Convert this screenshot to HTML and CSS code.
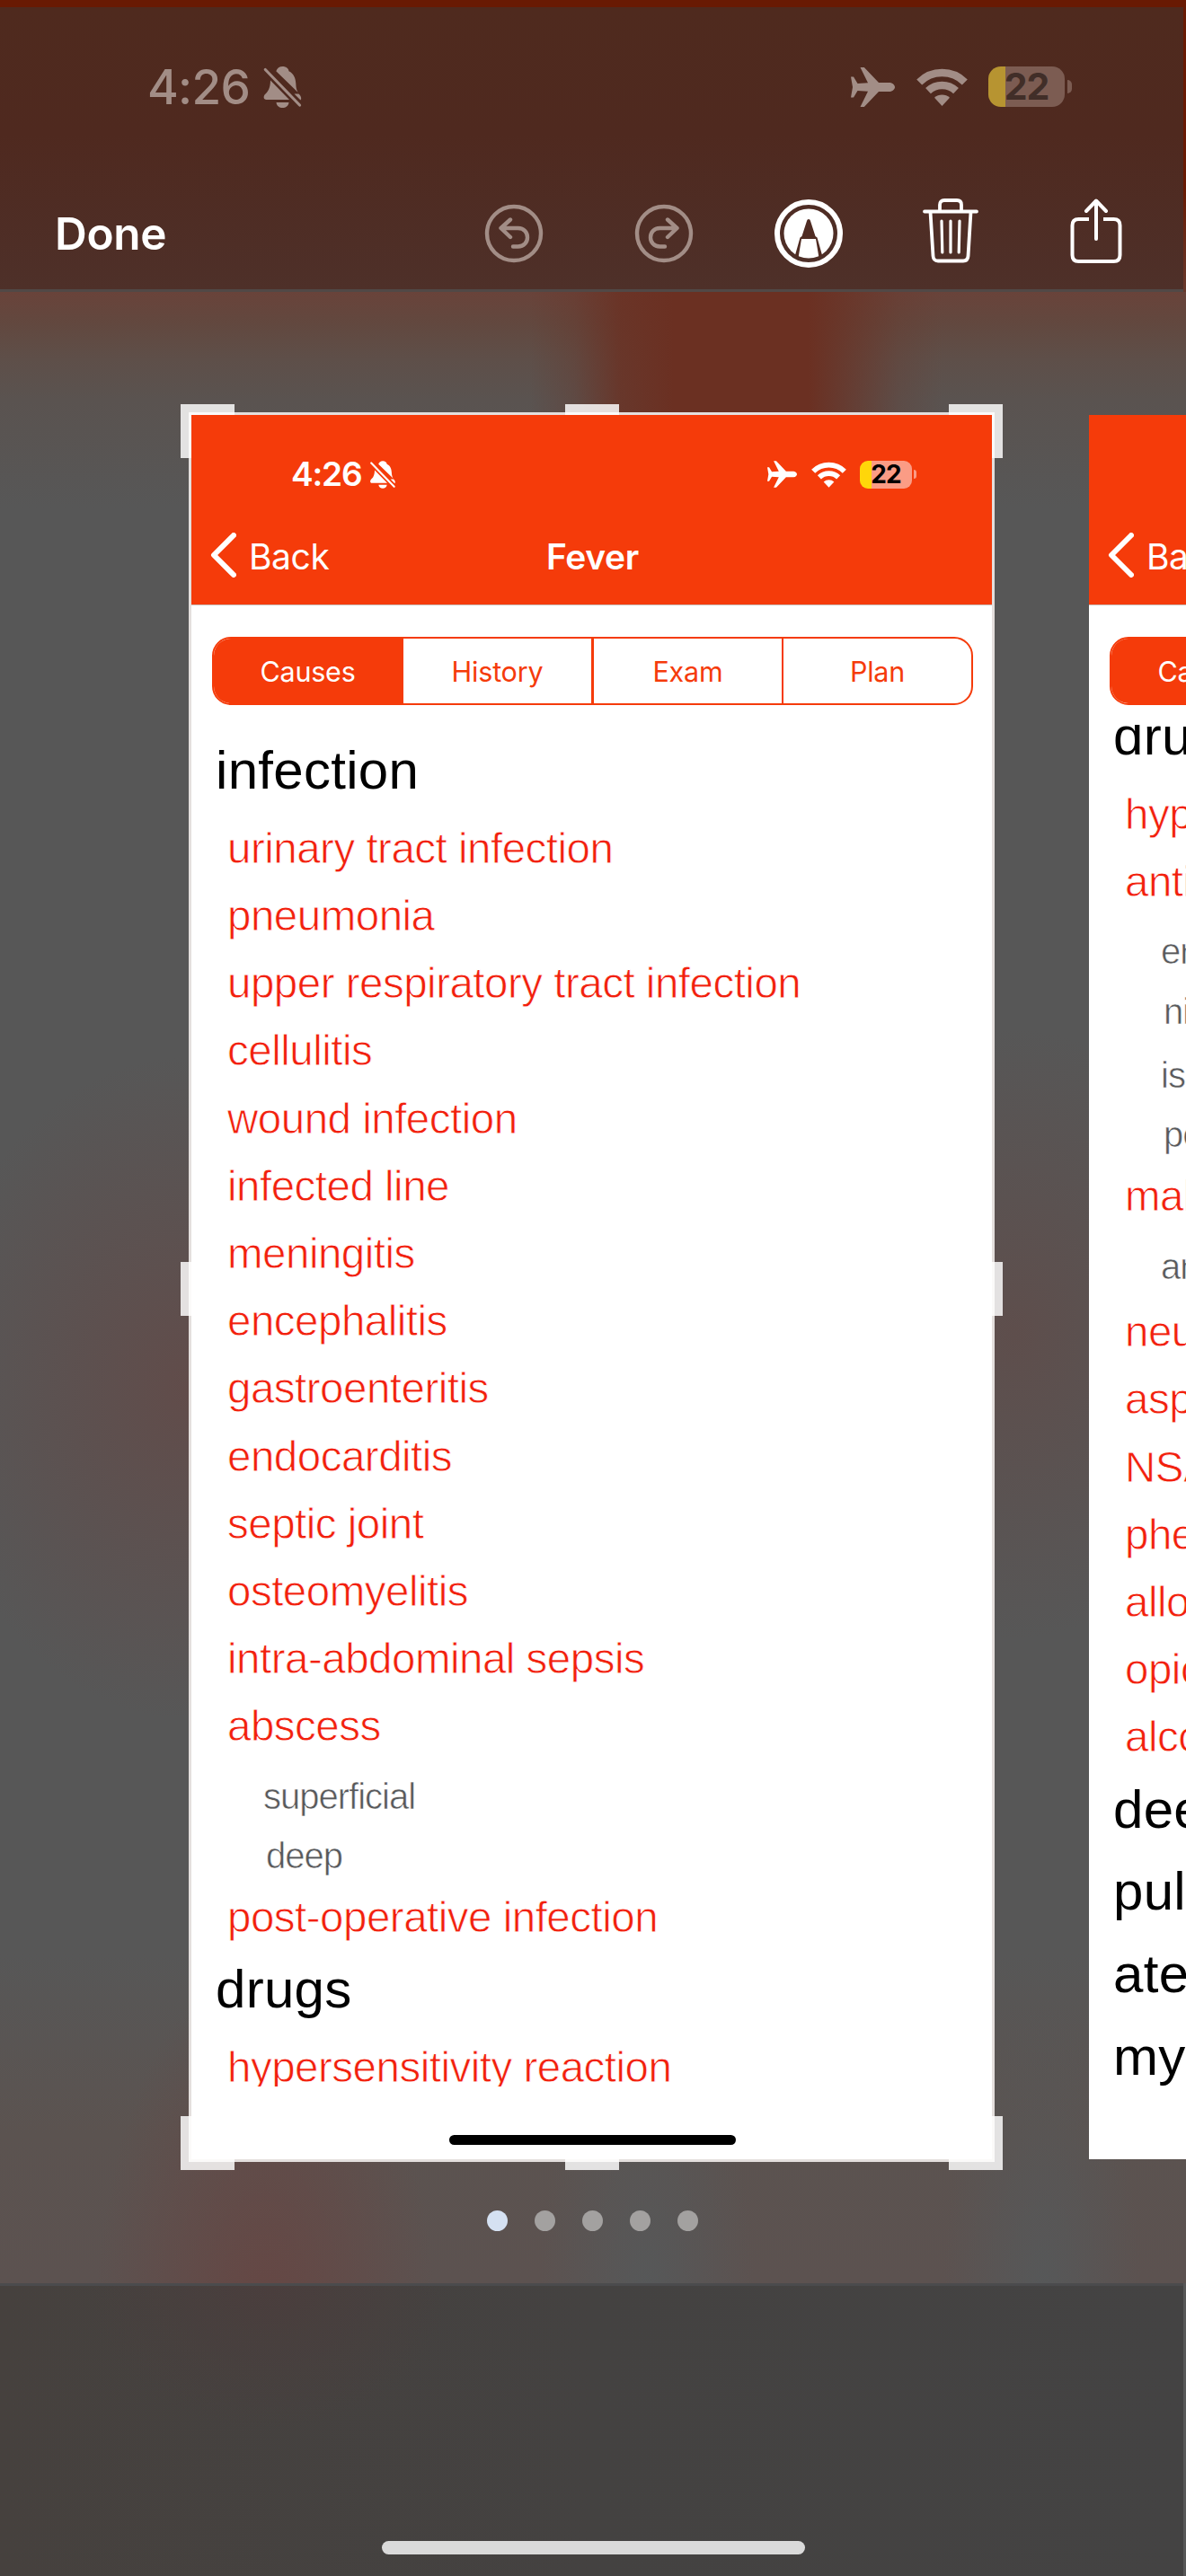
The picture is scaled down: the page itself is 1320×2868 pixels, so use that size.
FILE: index.html
```html
<!DOCTYPE html>
<html lang="en">
<head>
<meta charset="utf-8">
<title>Fever</title>
<link rel="stylesheet" href="styles.css">
</head>
<body>
<svg class="defs" width="0" height="0" aria-hidden="true">
  <symbol id="bell" viewBox="0 0 42 46">
    <path d="M21 0c4 0 6.500 2.200 7 5.200 5.500 2.500 7.500 8 7.800 13.800.2 5.500 1.200 8.300 2.700 10.300L13.800 5.200C15 1.800 17.500 0 21 0zM7.500 15.500 28.500 37H3C-.5 37-.5 33 1.500 31c3-2.800 5.800-6 6-15.500zM14 40h14c-.5 4-3.500 6-7 6s-6.500-2-7-6z" fill="currentColor"/>
    <path d="M34 30.500 41 37.500c1.500-2 .5-4.500-2-7z" fill="currentColor"/>
    <path d="M1.800 3.500 40 43" stroke="currentColor" stroke-width="3.200" stroke-linecap="round"/>
  </symbol>
  <symbol id="plane" viewBox="0 0 49 44">
    <path d="M0 10.500h3L7.500 18 19 17.300 10.500 0h4.300L31 17h12.500C47 17.500 49 20 49 22s-2 4.500-5.500 5H31L14.800 44h-4.300L19 26.700 7.500 26 3 33.500H0L2 22z" fill="currentColor"/>
  </symbol>
  <symbol id="wifi" viewBox="0 0 57 42">
    <path d="M3.200 15.500a36 36 0 0 1 50.600 0M13 25.200a22.500 22.500 0 0 1 31 0" fill="none" stroke="currentColor" stroke-width="8.500"/>
    <path d="M28.500 42 20 32.800a12.500 12.500 0 0 1 17 0z" fill="currentColor"/>
  </symbol>
</svg>

<div class="screen">
  <header class="topbar">
    <div class="status">
      <span class="time">4:26</span>
      <svg class="bell"><use href="#bell"/></svg>
      <svg class="plane"><use href="#plane"/></svg>
      <svg class="wifi"><use href="#wifi"/></svg>
      <span class="battery">22</span><i class="nub"></i>
    </div>
    <div class="tools">
      <span class="done">Done</span>
      <svg class="undo" viewBox="0 0 66 66"><g fill="none" stroke="currentColor" stroke-width="4.400" stroke-linecap="round" stroke-linejoin="round"><circle cx="33" cy="33" r="30"/><path d="M29 17.500 18.500 27 29 37M19 27h18.500c14 0 14 20.500 0 20.500H32"/></g></svg>
      <svg class="redo" viewBox="0 0 66 66"><g fill="none" stroke="currentColor" stroke-width="4.400" stroke-linecap="round" stroke-linejoin="round"><circle cx="33" cy="33" r="30"/><path d="M37 17.500 47.500 27 37 37M47 27H28.500c-14 0-14 20.500 0 20.500H34"/></g></svg>
      <svg class="markup" viewBox="0 0 76 76"><circle cx="38" cy="38" r="35" fill="none" stroke="#fff" stroke-width="6"/><circle cx="38" cy="38" r="27.500" fill="#fff"/><path d="M38 22c1 0 1.700.8 2 2l5.500 17 2 1.500L53 62l-3.500 3L46 44H30l-3.500 21-3.500-3 5.500-19.500 2-1.500L36 24c.3-1.200 1-2 2-2z" fill="#502c23"/></svg>
      <svg class="trash" viewBox="0 0 62 72"><g fill="none" stroke="#fff" stroke-width="3.800" stroke-linecap="round" stroke-linejoin="round"><path d="M2 14.500h58M19 14V7q0-5 5-5h14q5 0 5 5v7M8.500 15l3 49q.4 5.500 5.500 5.500h28q5.100 0 5.500-5.500l3-49"/><path d="M21 25l.8 35M31 25v35M41 25l-.8 35" stroke-width="3.200"/></g></svg>
      <svg class="share" viewBox="0 0 58 72"><g fill="none" stroke="#fff" stroke-width="4" stroke-linecap="round" stroke-linejoin="round"><path d="M21 23H9.500Q2.500 23 2.500 30v33q0 7 7 7h39q7 0 7-7V30q0-7-7-7H37" stroke-linecap="butt"/><path d="M29 45V3M18 14 29 2.500 40 14"/></g></svg>
    </div>
  </header>

  <main class="stage">
    <div class="strip">
      <section class="page">
        <div class="head">
          <div class="status small">
            <span class="time">4:26</span>
            <svg class="bell"><use href="#bell"/></svg>
            <svg class="plane"><use href="#plane"/></svg>
            <svg class="wifi"><use href="#wifi"/></svg>
            <span class="battery">22</span><i class="nub"></i>
          </div>
          <div class="nav">
            <svg class="chev" viewBox="0 0 29 50"><path d="M26 3 4 25l22 22" fill="none" stroke="#fff" stroke-width="6" stroke-linecap="round" stroke-linejoin="round"/></svg>
            <span class="back">Back</span><h1>Fever</h1>
          </div>
        </div>
        <div class="tabs"><span class="on">Causes</span><span>History</span><span>Exam</span><span>Plan</span></div>
        <div class="list">
          <div class="scroll first">
            <h2>infection</h2>
            <p>urinary tract infection</p>
            <p>pneumonia</p>
            <p>upper respiratory tract infection</p>
            <p>cellulitis</p>
            <p>wound infection</p>
            <p>infected line</p>
            <p>meningitis</p>
            <p>encephalitis</p>
            <p>gastroenteritis</p>
            <p>endocarditis</p>
            <p>septic joint</p>
            <p>osteomyelitis</p>
            <p>intra-abdominal sepsis</p>
            <p>abscess</p>
            <p class="sub">superficial</p>
            <p class="sub alt">deep</p>
            <p>post-operative infection</p>
            <h2>drugs</h2>
            <p>hypersensitivity reaction</p>
          </div>
        </div>
        <div class="home"></div>
        <div class="frame"><i></i><i></i><i></i><i></i><i></i><i></i><i></i><i></i></div>
      </section>

      <section class="page">
        <div class="head">
          <div class="status small"></div>
          <div class="nav">
            <svg class="chev" viewBox="0 0 29 50"><path d="M26 3 4 25l22 22" fill="none" stroke="#fff" stroke-width="6" stroke-linecap="round" stroke-linejoin="round"/></svg>
            <span class="back">Back</span>
          </div>
        </div>
        <div class="tabs"><span class="on">Causes</span><span></span><span></span><span></span></div>
        <div class="list">
          <div class="scroll second">
            <h2>drugs</h2>
            <p>hypersensitivity</p>
            <p>antibiotics</p>
            <p class="sub">erythromycin</p>
            <p class="sub alt">nitrofurantoin</p>
            <p class="sub">isoniazid</p>
            <p class="sub alt">penicillin</p>
            <p>malignant</p>
            <p class="sub">anaesthetic</p>
            <p>neuroleptic</p>
            <p>aspirin</p>
            <p>NSAIDs</p>
            <p>phenytoin</p>
            <p>allopurinol</p>
            <p>opioids</p>
            <p>alcohol</p>
            <h2>deep vein</h2>
            <h2>pulmonary</h2>
            <h2>atelectasis</h2>
            <h2>myocardial</h2>
          </div>
        </div>
      </section>
    </div>
    <div class="dots"><i class="cur"></i><i></i><i></i><i></i><i></i></div>
  </main>

  <footer class="bottom"><div class="bar"></div></footer>
</div>
</body>
</html>
```
FILE: styles.css
```css
* { box-sizing: border-box; }
body { margin: 0; font-family: Inter, "Liberation Sans", sans-serif; }
.defs { position: absolute; }
svg { display: block; flex: none; }
h1, h2, p { margin: 0; font-weight: 400; }

.screen {
  width: 1320px; height: 2868px; overflow: hidden;
  display: flex; flex-direction: column;
  background: linear-gradient(#691a03 0, #691a03 210px, #68382b 322px, #575757 500px);
}

/* toolbar */
.topbar {
  margin-top: 8px; width: 1317px; height: 317px;
  border-bottom: 3px solid #514846;
  background: linear-gradient(#4f2a1e, #4f291f 45%, #4e3029);
}
.status { display: flex; align-items: center; height: 134px; padding: 43px 0 0 164px; color: #a28d86; }
.status .time { flex: none; font-size: 53px; font-weight: 500; line-height: 60px; width: 129px; letter-spacing: -.700px; white-space: nowrap; }
.bell { width: 43px; height: 46px; }
.plane { width: 49px; height: 44px; margin-left: 611px; }
.wifi { width: 57px; height: 42px; margin: 0 23px 0 24px; }
.battery {
  width: 85px; height: 45px; border-radius: 14px; line-height: 45px; text-align: center;
  font-size: 41px; font-weight: 700; color: #412e28; letter-spacing: -1px;
  background: linear-gradient(90deg, #b79431 19px, #7c5c52 19px);
}
.nub { width: 5px; height: 15px; margin-left: 3px; background: #7c5c52; border-radius: 0 5px 5px 0; }
.tools { display: flex; align-items: center; height: 180px; padding: 55px 0 0 61px; }
.done { width: 478px; color: #fff; font-size: 49.500px; font-weight: 600; line-height: 60px; letter-spacing: -.3px; }
.undo, .redo { width: 66px; height: 66px; color: #a28d86; }
.redo { margin-left: 101px; }
.markup { width: 76px; height: 76px; margin-left: 90px; }
.trash { width: 62px; height: 72px; margin-left: 89px; margin-top: -5px; }
.share { width: 58px; height: 72px; margin-left: 102px; margin-top: -5px; }

/* backdrop */
.stage {
  height: 2217px; padding-top: 137px;
  background:
    linear-gradient(90deg, #6b302200 590px, #6b302244 640px, #6b3022cc 690px, #6b3022 750px, #6b3022 900px, #6b302299 950px, #6b302233 1000px, #6b302200 1050px) 0 0 / 100% 300px no-repeat,
    radial-gradient(ellipse 190px 420px at 295px 2280px, #664643 0, #66464300 100%),
    radial-gradient(ellipse 120px 330px at 720px 2240px, #565859 0, #56585900 100%),
    radial-gradient(ellipse 110px 330px at 1160px 2240px, #565859 0, #56585900 100%),
    radial-gradient(ellipse 290px 370px at 210px 1220px, #614c4a 0, #614c4a00 100%),
    radial-gradient(ellipse 260px 340px at 1130px 1160px, #5e4e4c 0, #5e4e4c00 100%),
    linear-gradient(#69433a 0, #62483f 35px, #5e4f49 75px, #5a5350 120px, #575757 240px, #575757 1850px, #5b5350 2050px, #5c5250 100%);
}
.strip { display: flex; gap: 108px; padding-left: 213px; height: 1942px; width: 1320px; }
.page { position: relative; flex: none; width: 891px; height: 1942px; background: #fff; display: flex; flex-direction: column; }
.head { height: 212px; background: #f53b0a; border-bottom: 1px solid #c9bcb8; }
.status.small { height: 98px; padding: 34px 0 0 111px; color: #fff; }
.small .time { font-size: 37px; width: 88px; font-weight: 600; line-height: 44px; letter-spacing: -1.200px; }
.small .bell { width: 28px; height: 31px; }
.small .plane { width: 33px; height: 30px; margin-left: 414px; }
.small .wifi { width: 39px; height: 29px; margin: 0 15px 0 16px; }
.small .battery { width: 58px; height: 31px; border-radius: 9px; line-height: 31px; font-size: 28px; font-weight: 700; color: #000; background: linear-gradient(90deg, #ffd60a 13px, #fb9c85 13px); }
.small .nub { width: 3px; height: 10px; margin-left: 2px; background: #fb9c85; }
.nav { display: flex; align-items: center; height: 113px; padding: 2px 0 0 21px; color: #fff; font-size: 39px; letter-spacing: -.400px; }
.chev { width: 29px; height: 50px; }
.back { margin-left: 14px; width: 331px; padding-top: 3px; }
.nav h1 { font-size: 39px; font-weight: 600; padding-top: 3px; }
.tabs { display: flex; width: 847px; height: 76px; margin: 35px 0 0 23px; border: 2px solid #f53b0a; border-radius: 21px; overflow: hidden; flex: none; }
.tabs span { flex: 1; text-align: center; line-height: 73px; font-size: 30.500px; letter-spacing: -.2px; color: #f53b0a; border-left: 2px solid #f53b0a; }
.tabs span:nth-child(3) { border-left-width: 3px; }
.tabs .on { background: #f53b0a; color: #fff; border-left: 0; }

/* list */
.list { height: 1516px; margin-top: 22px; overflow: hidden; flex: none; font-family: "Liberation Sans", Arial, sans-serif; white-space: nowrap; }
.first { padding-top: 8px; }
.second { margin-top: -29.700px; }
.list h2 { font-size: 60px; line-height: 85.800px; margin-bottom: 6px; padding-left: 27px; color: #000; letter-spacing: .3px; }
.list p { font-size: 47.500px; line-height: 75.200px; padding-left: 40px; color: #f2200d; letter-spacing: -.5px; -webkit-text-stroke: .8px #fff; }
.list .sub { font-size: 40px; line-height: 70.600px; padding: 4.900px 0 0 80px; color: #58595b; letter-spacing: -1px; -webkit-text-stroke-width: .6px; }
.list .sub.alt { line-height: 62px; padding: 0 0 0 83px; }
.home { width: 319px; height: 11px; border-radius: 6px; background: #000; margin: 54px auto 0 287px; }

/* crop frame */
.frame { position: absolute; inset: -3px; border: 3px solid #e4dfdd; }
.frame i { position: absolute; border: 0 solid #ffffffd4; width: 60px; height: 60px; }
.frame i:nth-child(1) { left: -12px; top: -12px; border-width: 12px 0 0 12px; }
.frame i:nth-child(2) { right: -12px; top: -12px; border-width: 12px 12px 0 0; }
.frame i:nth-child(3) { left: -12px; bottom: -12px; border-width: 0 0 12px 12px; }
.frame i:nth-child(4) { right: -12px; bottom: -12px; border-width: 0 12px 12px 0; }
.frame i:nth-child(5) { left: 416px; top: -12px; border-top-width: 12px; }
.frame i:nth-child(6) { left: 416px; bottom: -12px; border-bottom-width: 12px; }
.frame i:nth-child(7) { left: -12px; top: 943px; border-left-width: 12px; }
.frame i:nth-child(8) { right: -12px; top: 943px; border-right-width: 12px; }

.dots { display: flex; gap: 30px; margin: 57px 0 0 542px; }
.dots i { width: 23px; height: 23px; border-radius: 50%; background: #a3a1a0; }
.dots .cur { background: #d5e1f2; }

.bottom {
  width: 1317px; height: 326px; padding-top: 284px; border-top: 3px solid #4b4b4d;
  background: radial-gradient(ellipse 200px 160px at 300px 0, #4a3e3d 0, #4a3e3d00 100%), linear-gradient(90deg, #46413e, #444241 50%, #444343);
}
.bar { width: 471px; height: 15px; border-radius: 8px; background: #dadada; margin-left: 425px; }
```
